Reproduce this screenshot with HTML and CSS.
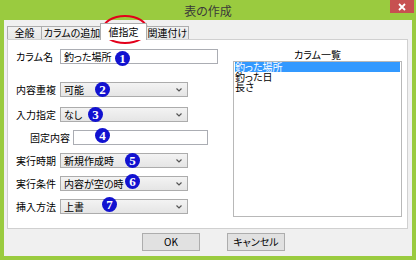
FILE: index.html
```html
<!DOCTYPE html>
<html lang="ja">
<head>
    <meta charset="UTF-8">
    <title>表の作成</title>
    <link rel="stylesheet" href="styles.css">
</head>
<body>

    <div class="window">

        <!-- title bar -->
        <div class="titlebar">
            <span class="title">表の作成</span>
            <div class="close">
                <svg width="8" height="8" viewBox="0 0 8 8"><path d="M1 1L7 7M7 1L1 7" stroke="#fff" stroke-width="1.8"/></svg>
            </div>
        </div>

        <div class="client">

            <!-- tabs -->
            <div class="tabs">
                <div class="tab t1">全般</div>
                <div class="tab t2">カラムの追加</div>
                <div class="tab active">値指定</div>
                <div class="tab t4">関連付け</div>
            </div>

            <div class="panel">

                <!-- left form -->
                <div class="form">
                    <div class="row">
                        <div class="label">カラム名</div>
                        <div class="field wide">釣った場所</div>
                    </div>
                    <div class="row r2">
                        <div class="label">内容重複</div>
                        <div class="select"><span>可能</span><svg width="6" height="4" viewBox="0 0 6 4"><path d="M0.5 0.5L3 3L5.5 0.5" fill="none" stroke="#555" stroke-width="1.2"/></svg></div>
                    </div>
                    <div class="row r3">
                        <div class="label">入力指定</div>
                        <div class="select"><span>なし</span><svg width="6" height="4" viewBox="0 0 6 4"><path d="M0.5 0.5L3 3L5.5 0.5" fill="none" stroke="#555" stroke-width="1.2"/></svg></div>
                    </div>
                    <div class="row indent">
                        <div class="label">固定内容</div>
                        <div class="field fixed"></div>
                    </div>
                    <div class="row">
                        <div class="label">実行時期</div>
                        <div class="select"><span>新規作成時</span><svg width="6" height="4" viewBox="0 0 6 4"><path d="M0.5 0.5L3 3L5.5 0.5" fill="none" stroke="#555" stroke-width="1.2"/></svg></div>
                    </div>
                    <div class="row">
                        <div class="label">実行条件</div>
                        <div class="select"><span>内容が空の時</span><svg width="6" height="4" viewBox="0 0 6 4"><path d="M0.5 0.5L3 3L5.5 0.5" fill="none" stroke="#555" stroke-width="1.2"/></svg></div>
                    </div>
                    <div class="row">
                        <div class="label">挿入方法</div>
                        <div class="select"><span>上書</span><svg width="6" height="4" viewBox="0 0 6 4"><path d="M0.5 0.5L3 3L5.5 0.5" fill="none" stroke="#555" stroke-width="1.2"/></svg></div>
                    </div>
                </div>

                <!-- column list -->
                <div class="columns">
                    <div class="list-title">カラム一覧</div>
                    <div class="listbox">
                        <div class="item selected">釣った場所</div>
                        <div class="item">釣った日</div>
                        <div class="item">長さ</div>
                    </div>
                </div>

            </div>

            <!-- buttons -->
            <div class="buttons">
                <div class="button">OK</div>
                <div class="button">キャンセル</div>
            </div>
        </div>

        <!-- annotations -->
        <svg class="mark" width="48" height="32" viewBox="0 0 48 32"><ellipse cx="24" cy="15.5" rx="22" ry="13.5" fill="none" stroke="#e3001b" stroke-width="2"/></svg>
        <div class="num n1">1</div>
        <div class="num n2">2</div>
        <div class="num n3">3</div>
        <div class="num n4">4</div>
        <div class="num n5">5</div>
        <div class="num n6">6</div>
        <div class="num n7">7</div>
    </div>

</body>
</html>
```

FILE: styles.css
```css
body{
    margin: 0;
    font-family: "Noto Sans CJK JP", sans-serif;
    font-size: 10px;
    font-feature-settings: "palt";
    color: #000;
}

.window{
    position: relative;
    width: 416px;
    height: 260px;
    box-sizing: border-box;
    padding: 0 4px 4px;
    background-color: #9acb3f;

    display: flex;
    flex-direction: column;
}

.titlebar{
    height: 20px;
    display: flex;
    justify-content: center;
    align-items: center;
    font-size: 12px;
    color: #3a3a3a;
}

.close{
    position: absolute;
    top: 0;
    right: 2px;
    width: 24px;
    height: 13px;
    background-color: #c75050;
    display: flex;
    justify-content: center;
    align-items: center;
}

.client{
    flex: 1;
    background-color: #f0f0f0;
    padding: 3px 3px 0;
    display: flex;
    flex-direction: column;
}

/* tabs */
.tabs{
    display: flex;
    align-items: flex-end;
    height: 17px;
    margin-bottom: -1px;
    position: relative;
    z-index: 1;
}

.tab{
    height: 13px;
    box-sizing: border-box;
    margin-bottom: 1px;
    margin-right: -1px;
    border: 1px solid #adadad;
    border-bottom: 0;
    background: linear-gradient(#f2f2f2, #e6e6e6);
    text-align: center;
    line-height: 12px;
    white-space: nowrap;
}

.t1{ width: 35px; }
.t2{ width: 62px; }
.t4{ width: 43px; }

.tab.active{
    width: 47px;
    height: 17px;
    margin: 0 -1px 0 -2px;
    padding-top: 2px;
    background: #fff;
    position: relative;
    z-index: 2;
}

.panel{
    height: 190px;
    box-sizing: border-box;
    margin-right: 1px;
    border: 1px solid #d0d0d0;
    background-color: #fff;
    padding: 9px 5px 0 8px;
    display: flex;
}

/* form */
.form{
    display: flex;
    flex-direction: column;
    gap: 8px;
}

.row{
    display: flex;
    align-items: center;
    height: 15px;
}

.r2{ margin-top: 10px; }
.r3{ margin-top: 2px; }

.label{
    width: 44px;
    white-space: nowrap;
}

.indent{
    padding-left: 14px;
}

.indent .label{
    width: 43px;
}

.field{
    height: 15px;
    box-sizing: border-box;
    border: 1px solid #abadb3;
    background-color: #fff;
    padding-left: 3px;
    line-height: 13px;
}

.wide{ width: 158px; }
.fixed{ width: 135px; }

.select{
    width: 128px;
    height: 15px;
    box-sizing: border-box;
    border: 1px solid #acacac;
    background: linear-gradient(#f3f3f3, #e5e5e5);
    padding: 0 5px 0 3px;

    display: flex;
    justify-content: space-between;
    align-items: center;
    line-height: 13px;
}

/* column list */
.columns{
    margin-left: auto;
    width: 169px;
}

.list-title{
    height: 12px;
    line-height: 12px;
    text-align: center;
}

.listbox{
    height: 156px;
    box-sizing: border-box;
    border: 1px solid #b8b8b8;
    padding: 0 1px;
}

.item{
    height: 10px;
    line-height: 10px;
    white-space: nowrap;
}

.item.selected{
    background-color: #3399ff;
    color: #fff;
}

/* buttons */
.buttons{
    display: flex;
    justify-content: center;
    gap: 27px;
    margin-top: 4px;
    padding-left: 11px;
}

.button{
    width: 58px;
    height: 18px;
    box-sizing: border-box;
    border: 1px solid #adadad;
    background-color: #e1e1e1;
    text-align: center;
    line-height: 16px;
}

/* annotations */
.mark{
    position: absolute;
    left: 101px;
    top: 14px;
}

.num{
    position: absolute;
    width: 15px;
    height: 15px;
    border-radius: 50%;
    background-color: #1212d0;
    color: #fff;
    font-family: "Liberation Serif", serif;
    font-weight: bold;
    font-size: 13px;
    line-height: 15px;
    text-align: center;
}

.n1{ left: 115px; top: 51px; }
.n2{ left: 95px;  top: 82px; }
.n3{ left: 88px;  top: 107px; }
.n4{ left: 95px;  top: 128px; }
.n5{ left: 125px; top: 153px; }
.n6{ left: 125px; top: 174px; }
.n7{ left: 102px; top: 197px; }
```
